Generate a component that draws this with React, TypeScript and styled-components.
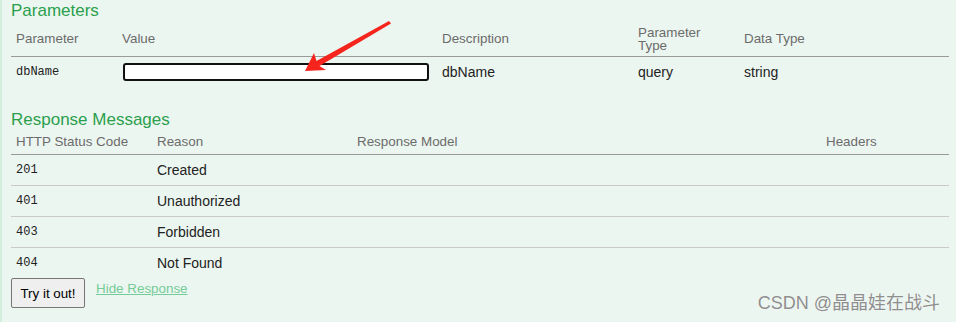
import React from "react";
import styled, { createGlobalStyle } from "styled-components";

const Global = createGlobalStyle`
  html, body { margin: 0; padding: 0; background: #ecf6f0; }
  body { font-family: "Liberation Sans", Arial, sans-serif; }
`;

const Page = styled.div`
  position: relative;
  width: 956px;
  height: 322px;
  box-sizing: border-box;
  border-left: 2px solid #d2eedc;
  padding: 0 7px 0 9px;
  background: #ecf6f0;
  overflow: hidden;
`;

const Title = styled.h4<{ $top?: number }>`
  margin: ${(p) => p.$top ?? 0}px 0 0 0;
  font-size: 17px;
  line-height: 22px;
  font-weight: normal;
  color: #2b9f4e;
`;

const Table = styled.table`
  width: 938px;
  border-collapse: collapse;
  table-layout: fixed;
`;

const Th = styled.th<{ $w: number; $h: number; $tight?: boolean }>`
  width: ${(p) => p.$w}px;
  height: ${(p) => p.$h}px;
  padding: 0 0 0 5px;
  text-align: left;
  vertical-align: middle;
  font-weight: normal;
  font-size: 13.4px;
  line-height: ${(p) => (p.$tight ? "13px" : "16px")};
  color: #6b6b6b;
  border-bottom: 1px solid #9a9a9a;
  box-sizing: border-box;
`;

const Td = styled.td<{ $h: number; $last?: boolean; $mono?: boolean }>`
  height: ${(p) => p.$h}px;
  padding: 0 0 0 5px;
  vertical-align: middle;
  font-family: ${(p) =>
    p.$mono ? '"Liberation Mono", "DejaVu Sans Mono", monospace' : '"Liberation Sans", Arial, sans-serif'};
  font-size: ${(p) => (p.$mono ? "12px" : "14px")};
  color: #222;
  border-bottom: ${(p) => (p.$last ? "none" : "1px solid #cacaca")};
  box-sizing: content-box;
`;

const Input = styled.input`
  display: block;
  width: 306px;
  height: 18px;
  margin-left: 1px;
  box-sizing: border-box;
  border: 2px solid #111;
  border-radius: 3px;
  background: #fff;
  padding: 0;
  outline: none;
`;

const Actions = styled.div`
  display: flex;
  align-items: flex-start;
  gap: 11px;
`;

const Button = styled.button`
  width: 74px;
  height: 30px;
  box-sizing: border-box;
  background: #efefef;
  border: 1px solid #767676;
  border-radius: 2px;
  font-family: "Liberation Sans", Arial, sans-serif;
  font-size: 13.33px;
  color: #000;
  padding: 0;
`;

const Link = styled.a`
  font-size: 13.4px;
  line-height: 22px;
  color: #76cc98;
  text-decoration: underline;
`;

const Watermark = styled.div`
  position: absolute;
  right: 16px;
  bottom: 8px;
  font-family: "Liberation Sans", "Noto Sans CJK SC", sans-serif;
  font-size: 18px;
  color: #8e8e8e;
  text-shadow: 0 0 1px #fff;
`;

const Arrow = styled.svg`
  position: absolute;
  left: 0;
  top: 0;
  pointer-events: none;
`;

const responses = [
  ["201", "Created"],
  ["401", "Unauthorized"],
  ["403", "Forbidden"],
  ["404", "Not Found"],
];

export default function App() {
  return (
    <Page>
      <Global />
      <Title>Parameters</Title>
      <Table>
        <thead>
          <tr>
            <Th $w={106} $h={34}>Parameter</Th>
            <Th $w={320} $h={34}>Value</Th>
            <Th $w={196} $h={34}>Description</Th>
            <Th $w={106} $h={34} $tight>
              Parameter
              <br />
              Type
            </Th>
            <Th $w={210} $h={34}>Data Type</Th>
          </tr>
        </thead>
        <tbody>
          <tr>
            <Td $h={31} $last $mono>dbName</Td>
            <Td $h={31} $last>
              <Input />
            </Td>
            <Td $h={31} $last>dbName</Td>
            <Td $h={31} $last>query</Td>
            <Td $h={31} $last>string</Td>
          </tr>
        </tbody>
      </Table>
      <Title $top={21}>Response Messages</Title>
      <Table>
        <thead>
          <tr>
            <Th $w={141} $h={24}>HTTP Status Code</Th>
            <Th $w={200} $h={24}>Reason</Th>
            <Th $w={469} $h={24}>Response Model</Th>
            <Th $w={128} $h={24}>Headers</Th>
          </tr>
        </thead>
        <tbody>
          {responses.map(([code, reason], i) => {
            const last = i === responses.length - 1;
            return (
              <tr key={code}>
                <Td $h={30} $last={last} $mono>{code}</Td>
                <Td $h={30} $last={last}>{reason}</Td>
                <Td $h={30} $last={last}></Td>
                <Td $h={30} $last={last}></Td>
              </tr>
            );
          })}
        </tbody>
      </Table>
      <Actions>
        <Button>Try it out!</Button>
        <Link href="#">Hide Response</Link>
      </Actions>
      <Watermark>CSDN @晶晶娃在战斗</Watermark>
      <Arrow width="956" height="322" viewBox="0 0 956 322">
        <polygon
          points="303,71 312,53 314.5,61 387,21 389,23.5 317.5,66 324,70"
          fill="#f5241c"
        />
      </Arrow>
    </Page>
  );
}
